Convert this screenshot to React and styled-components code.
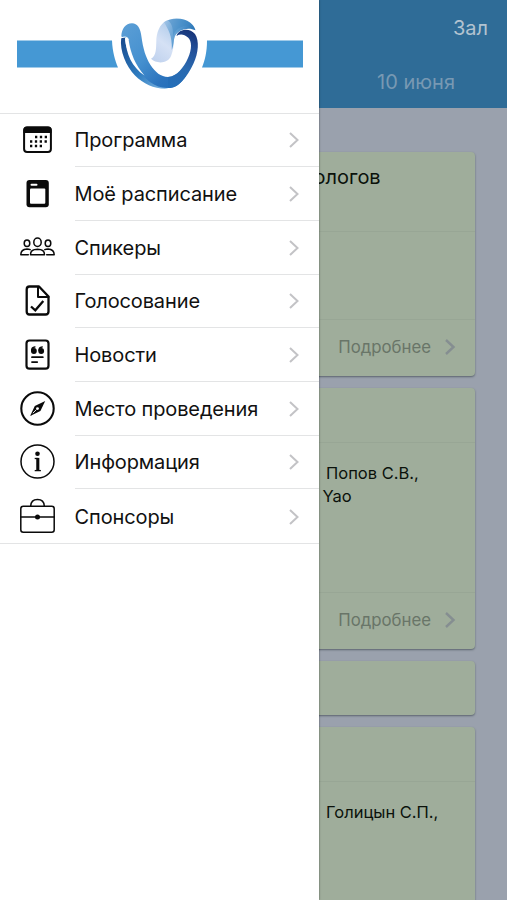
import React, { Component } from "react";
import styled, { createGlobalStyle } from "styled-components";

const GlobalStyle = createGlobalStyle`
  body {
    margin: 0;
    background: #9aa1ad;
    font-family: Inter, "Liberation Sans", sans-serif;
    color: #111;
  }
`;

const Screen = styled.div`
  position: relative;
  width: 507px;
  height: 900px;
  overflow: hidden;
`;

const Page = styled.div`
  display: flex;
  flex-direction: column;
  height: 100%;
`;
const TopBar = styled.header`
  display: flex;
  flex-direction: column;
  flex-shrink: 0;
  align-items: flex-end;
  box-sizing: border-box;
  height: 108px;
  padding-top: 14px;
  background: #2f6c97;
`;
const HallButton = styled.div`
  margin-right: 19px;
  font-size: 20px;
  line-height: 28px;
  color: #b3c3d0;
`;
const DayTab = styled.div`
  margin: 26px 52px 0 0;
  font-size: 20px;
  line-height: 28px;
  color: #7899b3;
`;
const Cards = styled.main`
  display: flex;
  flex-direction: column;
  gap: 12.5px;
  padding: 44px 32px 0;
`;
const Card = styled.article`
  flex-shrink: 0;
  border-radius: 4px;
  background: #9fad9b;
  box-shadow: 0 1px 2px rgba(40, 50, 60, 0.55);
`;
const CardHead = styled.div`
  box-sizing: border-box;
  height: ${props => props.$height}px;
  padding: 11px 0 0 281.5px;
  font-size: 20px;
  line-height: 28px;
  color: #0b120b;
`;
const CardBody = styled.div`
  box-sizing: border-box;
  height: ${props => props.$height}px;
  padding: 19px 0 0 290px;
  border-top: 1px solid #98a695;
  font-size: 16.5px;
  line-height: 23px;
  color: #0b120b;
`;
const BodyLine = styled.div`
  margin-left: ${props => props.$shift || 4}px;
`;
const CardFoot = styled.div`
  display: flex;
  align-items: center;
  justify-content: flex-end;
  gap: 13px;
  box-sizing: border-box;
  height: 56.5px;
  padding: 0 19px 2px 0;
  border-top: 1px solid #98a695;
  font-size: 16.8px;
  color: #697568;
`;

const Drawer = styled.aside`
  position: absolute;
  top: 0;
  left: 0;
  width: 318.5px;
  height: 100%;
  background: #fff;
  box-shadow: 0 0 2px rgba(0, 0, 0, 0.5);
`;
const DrawerHead = styled.div`
  height: 112.5px;
`;
const Menu = styled.nav`
  display: flex;
  flex-direction: column;
  border-top: 1px solid #e3e4e5;
  border-bottom: 1px solid #e3e4e5;
`;
const MenuItem = styled.div`
  display: flex;
  align-items: center;
  height: 53.7px;
  padding-left: 19.5px;
`;
const MenuLabel = styled.div`
  display: flex;
  flex: 1;
  align-items: center;
  justify-content: space-between;
  box-sizing: border-box;
  height: 100%;
  margin-left: 19px;
  padding: 1px 18.5px 0 0;
  border-bottom: ${props => (props.$last ? "none" : "1px solid #e3e4e5")};
  font-size: 20px;
  letter-spacing: -0.12px;
`;

const StyledIcon = styled.svg`
  width: 36px;
  height: 36px;
  fill: none;
  stroke: #0a0a0a;
  stroke-width: ${props => props.$weight || 2.5};
  stroke-linecap: round;
  stroke-linejoin: round;
`;
const StyledChevron = styled.svg`
  width: 12px;
  height: 18px;
  fill: none;
  stroke: ${props => props.$color};
  stroke-width: ${props => props.$weight};
`;

const Chevron = ({ color = "#c3c3c6", weight = 2 }) => (
  <StyledChevron viewBox="0 0 12 18" $color={color} $weight={weight}>
    <path d="M2 2 L9.5 9 L2 16" />
  </StyledChevron>
);

// the drawings sit half a pixel up and left of the box
const Icon = ({ weight, children }) => (
  <StyledIcon viewBox="0.5 0.5 36 36" $weight={weight}>
    {children}
  </StyledIcon>
);

const CalendarIcon = () => (
  <Icon weight={2}>
    <rect x="4.6" y="6" width="26.8" height="24.5" rx="3" />
    <path d="M4 11.5V8.5Q4 5 7.5 5H28.5Q32 5 32 8.500V11.500Z" fill="#0a0a0a" stroke="none" />
    <path
      d="M15.5 15.5H28M10.5 20H28M10.5 24.5H23.5"
      strokeWidth="2.3"
      strokeLinecap="butt"
      strokeDasharray="2.3 2.55"
    />
  </Icon>
);
const ScheduleIcon = () => (
  <Icon>
    <rect x="7" y="4.5" width="22.3" height="27.2" rx="3" fill="#0a0a0a" stroke="none" />
    <rect x="10.5" y="13" width="15.3" height="15.3" rx="1" fill="#fff" stroke="none" />
    <path d="M12 9.3H17" stroke="#fff" strokeWidth="2" />
  </Icon>
);
const SpeakersIcon = () => (
  <Icon weight={1.5}>
    <ellipse cx="18" cy="12.7" rx="3.7" ry="4.2" />
    <path d="M11 25.3Q10.8 19.8 18 19.7Q25.2 19.8 25 25.3Z" />
    <ellipse cx="7.5" cy="13.7" rx="2.8" ry="3.3" />
    <path d="M8.8 25.2H1.3Q1.3 19.7 7.5 19.4Q9.3 19.4 10.7 20.2" />
    <ellipse cx="28.5" cy="13.7" rx="2.8" ry="3.3" />
    <path d="M27.2 25.2H34.7Q34.7 19.7 28.5 19.4Q26.7 19.4 25.3 20.2" />
  </Icon>
);
const VoteIcon = () => (
  <Icon weight={2.3}>
    <path d="M18.5 4H10Q7.2 4 7.2 7V29Q7.2 32 10 32H26Q29 32 29 29V14L19.5 4Z" />
    <path d="M18.5 4.5V14.5H29" strokeWidth="2" />
    <path d="M11.5 24L15.8 27.8L23.8 18.5" strokeLinecap="butt" strokeLinejoin="miter" />
  </Icon>
);
const NewsIcon = () => (
  <Icon weight={2.2}>
    <rect x="7" y="4" width="22" height="28.2" rx="3" />
    <circle cx="14.4" cy="14.5" r="2.9" fill="#0a0a0a" stroke="none" />
    <circle cx="21.7" cy="14.5" r="2.9" fill="#0a0a0a" stroke="none" />
    <path d="M12.3 14Q12 10.8 15.4 10.4M19.6 14Q19.3 10.8 22.7 10.4" strokeWidth="1.5" />
    <path d="M12.5 20.7H23.3M12.5 25.6H17.7" strokeWidth="1.8" />
  </Icon>
);
const CompassIcon = () => (
  <Icon weight={2.1}>
    <circle cx="18" cy="18" r="16.2" />
    <path d="M25.7 10.5L20.9 20.5L10.6 25.4L15.3 15.5Z" fill="#0a0a0a" stroke="none" />
    <circle cx="18" cy="18.1" r="1.4" fill="#fff" stroke="none" />
    <path d="M16.7 19.3L13.6 22.4" stroke="#fff" strokeWidth="0.9" />
  </Icon>
);
const InfoIcon = () => (
  <Icon weight={1.5}>
    <circle cx="18" cy="18" r="16.5" />
    <circle cx="18" cy="10.2" r="2.3" fill="#0a0a0a" stroke="none" />
    <path d="M15.2 15H18.3" strokeWidth="1.3" strokeLinecap="butt" />
    <path d="M18.3 14.4V26.8" strokeWidth="3.1" strokeLinecap="butt" />
    <path d="M15.2 27.1H21.4" strokeWidth="1.3" strokeLinecap="butt" />
  </Icon>
);
const SponsorsIcon = () => (
  <Icon weight={1.5}>
    <rect x="1.3" y="8.7" width="33.4" height="26" rx="2.5" />
    <path d="M11.2 8.5Q11.5 2 18 2Q24.5 2 24.8 8.5" />
    <path d="M1.3 19.6H34.7" />
    <circle cx="18" cy="19.6" r="2.5" fill="#0a0a0a" stroke="none" />
  </Icon>
);

const Logo = () => (
  <svg width="318" height="112" viewBox="0 0 318 112">
    <defs>
      <linearGradient id="ribbon" x1="0" y1="0" x2="1" y2="1">
        <stop offset="0" stopColor="#5c9fd6" />
        <stop offset="0.45" stopColor="#4590cf" />
        <stop offset="0.75" stopColor="#2b73bd" />
        <stop offset="1" stopColor="#1f6cb8" />
      </linearGradient>
      <linearGradient id="rightSide" x1="168" y1="88" x2="192" y2="32" gradientUnits="userSpaceOnUse">
        <stop offset="0" stopColor="#236fba" />
        <stop offset="0.4" stopColor="#2a6ab0" />
        <stop offset="0.75" stopColor="#234f98" />
        <stop offset="1" stopColor="#17357a" />
      </linearGradient>
      <linearGradient id="leftSide" x1="0" y1="0" x2="1" y2="1">
        <stop offset="0" stopColor="#17498c" />
        <stop offset="0.55" stopColor="#2e7cc0" />
        <stop offset="1" stopColor="#82b8e3" />
      </linearGradient>
      <linearGradient id="crest" x1="0" y1="0" x2="1" y2="0.3">
        <stop offset="0" stopColor="#a6c6e7" />
        <stop offset="0.5" stopColor="#5c9dd2" />
        <stop offset="1" stopColor="#2873b5" />
      </linearGradient>
      <linearGradient id="foam" x1="0" y1="1" x2="0.6" y2="0">
        <stop offset="0" stopColor="#bdd0ed" />
        <stop offset="0.5" stopColor="#d5e1f5" />
        <stop offset="1" stopColor="#abc9e9" />
      </linearGradient>
    </defs>
    <path d="M17 40.5H112C112.5 52 115 60 118 67.5H17Z" fill="#4598d4" />
    <path d="M207 40.5H303V67.5H202C205 60 207 52 207 40.5Z" fill="#4598d4" />
    <path
      d="M121.200 38C119.500 51 126 66 135 75.500C144 84.500 156 89.500 168 88.500C158 83 145 76 136 64C129 55 125 46 125 37.500Z"
      fill="url(#leftSide)"
    />
    <path
      d="M121.300 36.500C121.500 29 125.500 23.300 132 23.300C137.500 23.300 140.500 28 141.500 37C143 48 145.500 57 150.500 65C155 72 161 77 168 77C173 77 178 74 182 69L186 76C181 84 175 88 167 88C155 88 144 79 136 66C130 56 127.500 48 126.500 38.500Z"
      fill="url(#ribbon)"
    />
    <path
      d="M168 77C177 76.500 184 67 188 58C192 49 192 41 188 37.500C184 34 180 33.800 176.500 36C178.500 28.500 190 27.500 195 34C199.500 40.500 198.500 53 193.500 63.500C189 73 184 80 178 85C175 87.500 171 88 168 88Z"
      fill="url(#rightSide)"
    />
    <path
      d="M125.300 38.200C126 54 132 67 144.500 75.500C135.500 65 130.500 54 128.500 39C127.500 37 126 37 125.300 38.200Z"
      fill="#fff"
    />
    <path d="M121.500 38C124 36.500 127 36.500 128.600 39.500" fill="none" stroke="#fff" strokeWidth="1" />
    <path
      d="M151 58.800C156.500 56 156 48 156.300 42C156.300 32 160 24 166 21C174 18 183 20 183 27C178 30 174.500 34 174 39C173.500 46 173.500 50 171 56C168 64 156 64 151 58.800Z"
      fill="url(#foam)"
    />
    <path
      d="M164 22.300C172 16.500 184 18 190 22.500C193 25 194.500 27 195.500 30.300C188 26.500 178 29.500 174.800 36.500C173.300 40.500 174 45 171.800 50C172.500 36 168 29 164 22.300Z"
      fill="url(#crest)"
    />
    <path
      d="M168 20.300C173 24.500 173.300 31 173 37C175 28 184 24 193 26C186 18 175 18 168 20.300Z"
      fill="#3f87c4"
      opacity="0.45"
    />
  </svg>
);

const items = [
  { label: "Программа", ItemIcon: CalendarIcon },
  { label: "Моё расписание", ItemIcon: ScheduleIcon },
  { label: "Спикеры", ItemIcon: SpeakersIcon },
  { label: "Голосование", ItemIcon: VoteIcon },
  { label: "Новости", ItemIcon: NewsIcon },
  { label: "Место проведения", ItemIcon: CompassIcon },
  { label: "Информация", ItemIcon: InfoIcon },
  { label: "Спонсоры", ItemIcon: SponsorsIcon }
];

export default class App extends Component {
  renderFoot = () => {
    return (
      <CardFoot>
        Подробнее
        <Chevron color="#858e91" weight={2.4} />
      </CardFoot>
    );
  };
  renderPage = () => {
    return (
      <Page>
        <TopBar>
          <HallButton>Зал</HallButton>
          <DayTab>10 июня</DayTab>
        </TopBar>
        <Cards>
          <Card>
            <CardHead $height={79}>ологов</CardHead>
            <CardBody $height={88} />
            {this.renderFoot()}
          </Card>
          <Card>
            <CardHead $height={53.5} />
            <CardBody $height={150.5}>
              <BodyLine>Попов С.В.,</BodyLine>
              <BodyLine $shift={0.5}>Yao</BodyLine>
            </CardBody>
            {this.renderFoot()}
          </Card>
          <Card>
            <CardHead $height={53.5} />
          </Card>
          <Card>
            <CardHead $height={54} />
            <CardBody $height={151}>
              <BodyLine>Голицын С.П.,</BodyLine>
            </CardBody>
          </Card>
        </Cards>
      </Page>
    );
  };
  render() {
    return (
      <Screen>
        <GlobalStyle />
        {this.renderPage()}
        <Drawer>
          <DrawerHead>
            <Logo />
          </DrawerHead>
          <Menu>
            {items.map(({ label, ItemIcon }, index) => (
              <MenuItem key={label}>
                <ItemIcon />
                <MenuLabel $last={index === items.length - 1}>
                  {label}
                  <Chevron />
                </MenuLabel>
              </MenuItem>
            ))}
          </Menu>
        </Drawer>
      </Screen>
    );
  }
}
